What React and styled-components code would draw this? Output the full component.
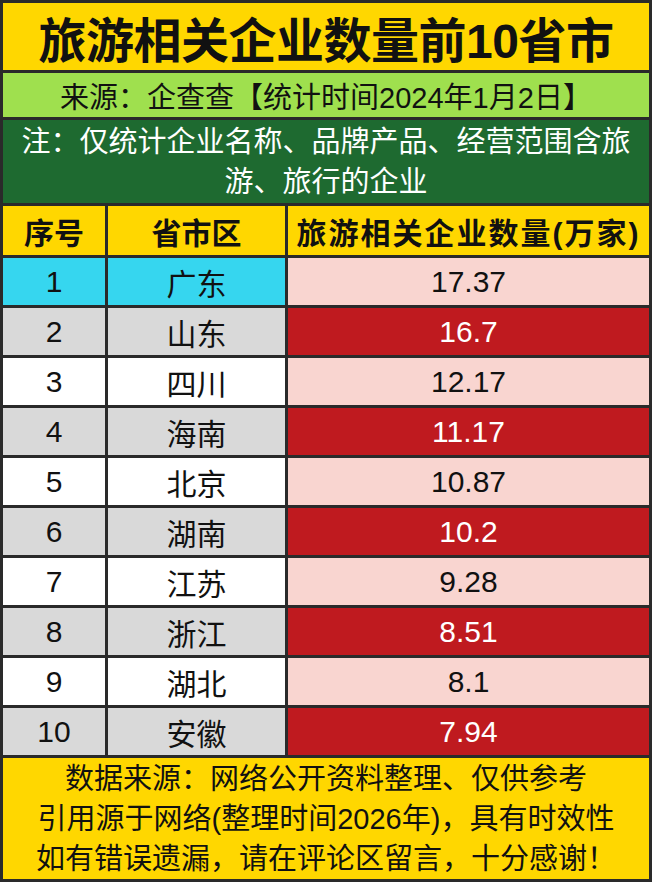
import styled, { createGlobalStyle } from 'styled-components';

const GlobalStyle = createGlobalStyle`
  html, body {
    margin: 0;
    padding: 0;
    background: #ffffff;
  }
  body {
    font-family: "Liberation Sans", "Noto Sans CJK SC", sans-serif;
  }
`;

const rows = [
  { rank: 1, region: '广东', count: '17.37' },
  { rank: 2, region: '山东', count: '16.7' },
  { rank: 3, region: '四川', count: '12.17' },
  { rank: 4, region: '海南', count: '11.17' },
  { rank: 5, region: '北京', count: '10.87' },
  { rank: 6, region: '湖南', count: '10.2' },
  { rank: 7, region: '江苏', count: '9.28' },
  { rank: 8, region: '浙江', count: '8.51' },
  { rank: 9, region: '湖北', count: '8.1' },
  { rank: 10, region: '安徽', count: '7.94' },
];

const leftBg = (rank) => {
  if (rank === 1) return '#36d6ef';
  return rank % 2 === 0 ? '#d9d9d9' : '#ffffff';
};

const App = () => {
  return (
    <>
      <GlobalStyle />
      <Sheet>
        <Title>旅游相关企业数量前10省市</Title>
        <Source>来源：企查查【统计时间2024年1月2日】</Source>
        <Note>注：仅统计企业名称、品牌产品、经营范围含旅游、旅行的企业</Note>
        <Table>
          <HeadCell>序号</HeadCell>
          <HeadCell>省市区</HeadCell>
          <HeadCell $spacing="2px">旅游相关企业数量(万家)</HeadCell>
          {rows.map((row) => (
            <Row key={row.rank}>
              <Cell $bg={leftBg(row.rank)}>{row.rank}</Cell>
              <Cell $bg={leftBg(row.rank)}>{row.region}</Cell>
              <Cell
                $bg={row.rank % 2 === 0 ? '#bf1a1f' : '#f9d5d0'}
                $color={row.rank % 2 === 0 ? '#ffffff' : '#111111'}
              >
                {row.count}
              </Cell>
            </Row>
          ))}
        </Table>
        <Footer>
          <span>数据来源：网络公开资料整理、仅供参考</span>
          <span>引用源于网络(整理时间2026年)，具有时效性</span>
          <span>如有错误遗漏，请在评论区留言，十分感谢！</span>
        </Footer>
      </Sheet>
    </>
  );
};

const Sheet = styled.div`
  width: 652px;
  height: 882px;
  box-sizing: border-box;
  padding: 3px;
  background: #2a2a2a;
  display: flex;
  flex-direction: column;
  gap: 3px;
`;

const Band = styled.div`
  display: flex;
  align-items: center;
  justify-content: center;
  text-align: center;
  color: #111111;
`;

const Title = styled(Band)`
  height: 67px;
  background: #ffd700;
  font-size: 48px;
  font-weight: bold;
  letter-spacing: -0.5px;
`;

const Source = styled(Band)`
  height: 44px;
  background: #9fe04e;
  font-size: 29px;
`;

const Note = styled(Band)`
  height: 83px;
  box-sizing: border-box;
  padding: 0 14px;
  background: #1e6a30;
  color: #ffffff;
  font-size: 29px;
  line-height: 40px;
`;

const Table = styled.div`
  display: grid;
  grid-template-columns: 102px 177px 1fr;
  grid-auto-rows: 47px;
  grid-template-rows: 49px;
  gap: 3px;
`;

const Row = styled.div`
  display: contents;
`;

const HeadCell = styled(Band)`
  background: #ffd700;
  font-size: 30px;
  font-weight: bold;
  letter-spacing: ${(p) => p.$spacing || '0'};
`;

const Cell = styled(Band)`
  background: ${(p) => p.$bg};
  color: ${(p) => p.$color || '#111111'};
  font-size: 30px;
`;

const Footer = styled.div`
  flex: 1;
  background: #ffd700;
  display: flex;
  flex-direction: column;
  align-items: center;
  justify-content: center;
  font-size: 29px;
  line-height: 40px;
  color: #111111;
`;

export default App;
